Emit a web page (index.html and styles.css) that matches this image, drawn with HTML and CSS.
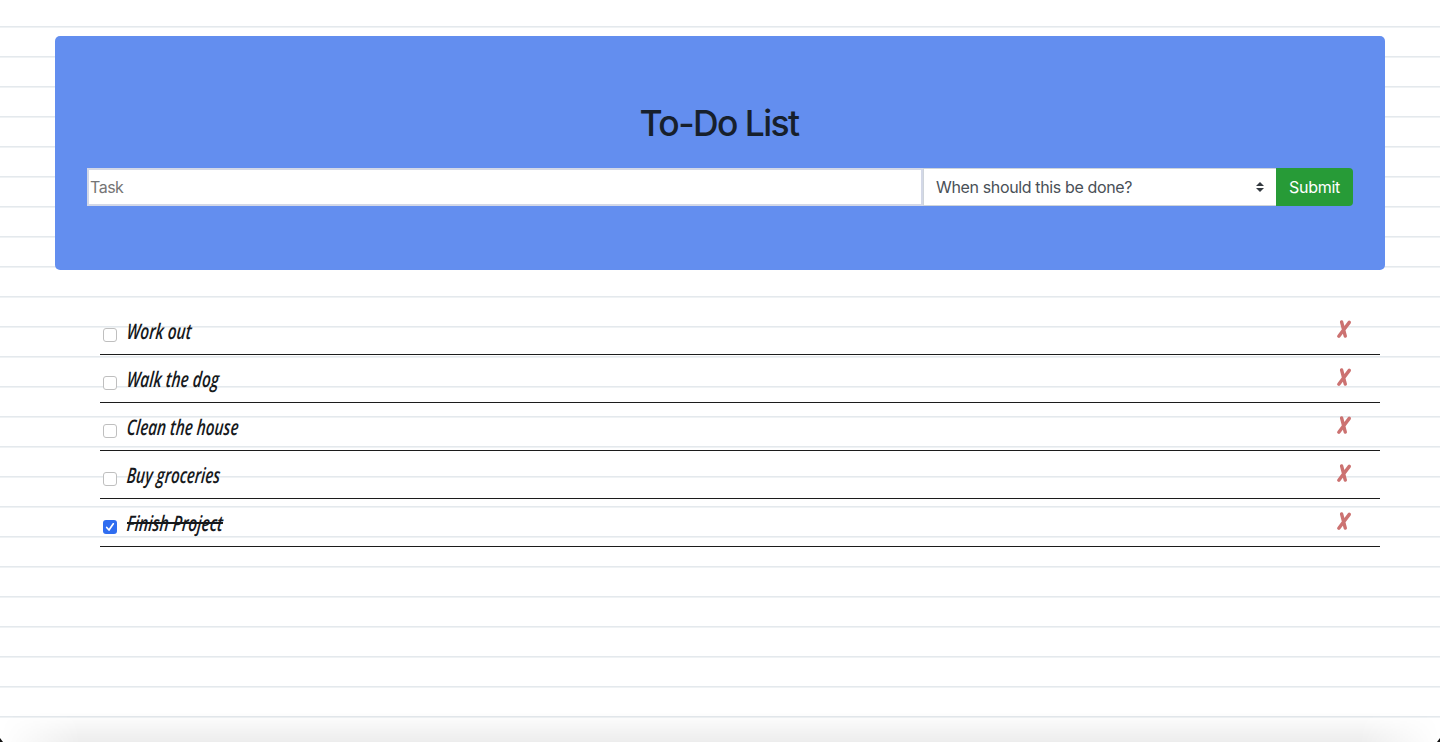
FILE: index.html
```html
<!DOCTYPE html>
<html lang="en">
<head>
<meta charset="utf-8">
<title>To-Do List</title>
<link rel="stylesheet" href="styles.css">
</head>
<body>
<svg class="defs" aria-hidden="true"><symbol id="remove" viewBox="0 0 16 20"><path d="M2.8 17.2 13.3 3.4M5.6 3 9.3 17.1"/></symbol></svg>
<main class="page">
  <header class="hero">
    <h1 class="title">To-Do List</h1>
    <form class="entry">
      <input class="task" type="text" placeholder="Task" aria-label="Task">
      <div class="when"><span>When should this be done?</span><svg class="arrows" viewBox="0 0 8 10"><path d="M4 0 0 4h8zM0 6h8L4 10z"/></svg></div>
      <button class="submit" type="button">Submit</button>
    </form>
  </header>
  <ul class="list">
    <li class="item"><span class="box"></span><span class="label work">Work out</span><svg class="remove"><use href="#remove"/></svg></li>
    <li class="item"><span class="box"></span><span class="label walk">Walk the dog</span><svg class="remove"><use href="#remove"/></svg></li>
    <li class="item"><span class="box"></span><span class="label clean">Clean the house</span><svg class="remove"><use href="#remove"/></svg></li>
    <li class="item"><span class="box"></span><span class="label buy">Buy groceries</span><svg class="remove"><use href="#remove"/></svg></li>
    <li class="item"><span class="box checked"><svg viewBox="0 0 14 14"><path d="M3.7 7.5 6 10l4.3-6.2"/></svg></span><span class="label done">Finish Project</span><svg class="remove"><use href="#remove"/></svg></li>
  </ul>
</main>
<div class="shade"></div>
<i class="corner left"></i><i class="corner right"></i>
</body>
</html>
```
FILE: styles.css
```css
* { box-sizing: border-box; }
body {
  margin: 0;
  height: 742px;
  overflow: hidden;
  font: 16px/24px Inter, sans-serif;
  color: #212529;
  background: repeating-linear-gradient(#fff 0 26px, #e4e9ed 26px 27px, #eff2f4 27px 28px, #fff 28px 30px);
}
.defs { position: absolute; width: 0; height: 0; }
.page { width: 1330px; margin: 0 auto; padding-top: 36px; }
.hero {
  height: 234px;
  padding: 64px 32px;
  border-radius: 5px;
  background: #638eef;
}
.title {
  margin: 0 0 20px;
  height: 48px;
  font-size: 35.5px;
  line-height: 48px;
  font-weight: 500;
  letter-spacing: -1.6px;
  text-indent: -2px;
  text-align: center;
  color: #17202c;
}
.entry { display: flex; height: 38px; }
.task {
  width: 836px;
  border: 2px solid #d3d8e7;
  border-radius: 0;
  padding: 1px;
  font: 16px Inter, sans-serif;
  letter-spacing: -.5px;
}
.task::placeholder { color: #757575; }
.when {
  width: 353px;
  display: flex;
  align-items: center;
  justify-content: space-between;
  padding: 0 12px;
  border: 1px solid #ced4da;
  border-right: 0;
  background: #fff;
  color: #495057;
  letter-spacing: -.36px;
}
.arrows { width: 8px; height: 10px; fill: #343a40; }
.submit {
  flex: 1;
  padding: 0;
  border: 0;
  border-radius: 0 4px 4px 0;
  background: #279b37;
  color: #fff;
  font: 16px Inter, sans-serif;
  letter-spacing: -.3px;
}
.list { margin: 37px 5px 0 45px; padding: 0; list-style: none; }
.item {
  display: flex;
  align-items: flex-start;
  height: 48px;
  padding: 12px 28px 0 3px;
  border-bottom: 1px solid #1c1c1c;
}
.box {
  width: 14px;
  height: 14px;
  margin: 9px 10px 0 0;
  border: 1px solid #bfbfbf;
  border-radius: 3px;
  background: #fff;
}
.checked { border: 0; background: #2f6df0; }
.checked svg { display: block; fill: none; stroke: #fff; stroke-width: 1.7; stroke-linecap: round; stroke-linejoin: round; }
.label {
  margin-top: -1px;
  font: italic 600 21.5px/26px "Open Sans", sans-serif;
  color: #16191c;
  white-space: nowrap;
  transform-origin: 0 50%;
  transform: skewX(-5deg) scaleX(.71);
}
.work { transform: skewX(-5deg) scaleX(.72); }
.walk { transform: skewX(-5deg) scaleX(.72); }
.done { transform: skewX(-5deg) scaleX(.725); text-decoration: line-through; text-decoration-thickness: 2px; }
.remove {
  width: 16px;
  height: 20px;
  margin-left: auto;
  fill: none;
  stroke: #cc7271;
  stroke-width: 3.4;
  stroke-linecap: round;
}
.shade {
  position: absolute;
  left: 0;
  right: 0;
  bottom: 0;
  height: 30px;
  background: linear-gradient(transparent, rgba(0, 0, 0, .07));
  mask-image: linear-gradient(90deg, transparent, #000 80px calc(100% - 80px), transparent);
}
.corner { position: absolute; bottom: 0; width: 3px; height: 4px; background: #111; }
.left { left: 0; clip-path: polygon(0 0, 100% 100%, 0 100%); }
.right { right: 0; clip-path: polygon(100% 0, 100% 100%, 0 100%); }
```
